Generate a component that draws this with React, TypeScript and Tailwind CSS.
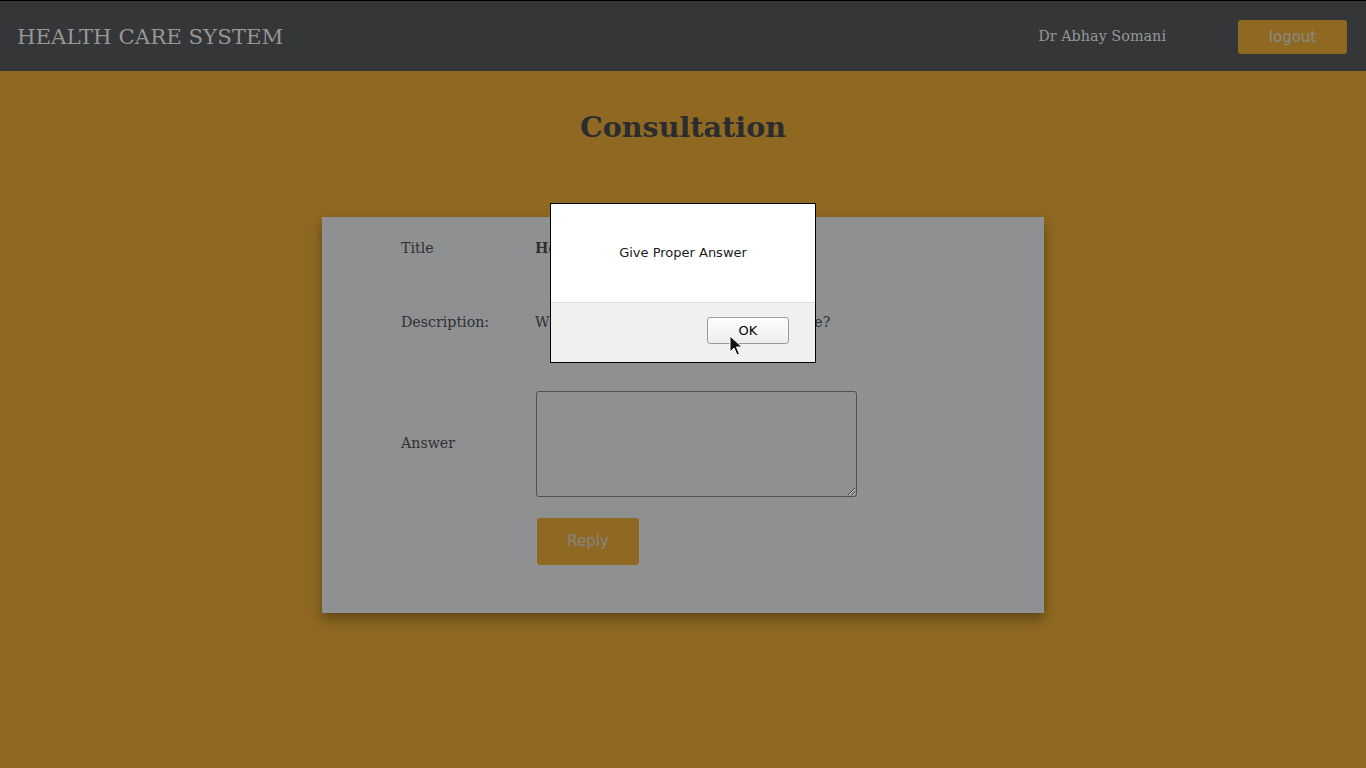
import React from 'react'

const serif = { fontFamily: '"DejaVu Serif", serif' }

function Cursor() {
  return (
    <svg width="14" height="22" viewBox="0 0 14 22" className="absolute left-[178px] top-[32px]">
      <path d="M1 1 L1 17 L5 13 L8 20 L10.5 19 L7.5 12 L13 12 Z" fill="#111" stroke="#fff" strokeWidth="1" strokeLinejoin="round" />
    </svg>
  )
}

function AlertBox() {
  return (
    <div className="absolute left-[550px] top-[203px] w-[266px] h-[160px] bg-white border border-black flex flex-col font-['DejaVu_Sans',sans-serif]">
      <div className="h-[98px] flex items-center justify-center text-[13px] text-[#1a1a1a]">
        Give Proper Answer
      </div>
      <div className="relative flex-1 bg-[#f0f0f0] border-t border-[#dedede] flex items-start justify-end pt-[14px] pr-[26px]">
        <button className="w-[82px] h-[27px] rounded-[3px] border border-[#9a9a9a] bg-gradient-to-b from-white to-[#ececec] text-[13px] text-black">
          OK
        </button>
        <Cursor />
      </div>
    </div>
  )
}

export default function App() {
  return (
    <div className="relative min-h-[768px] bg-[#8f6921]">
      <header className="h-[71px] bg-[#343638] border-t border-black flex items-center pt-[2px] px-[17px]" style={serif}>
        <div className="text-[21.3px] text-[#979797]">HEALTH CARE SYSTEM</div>
        <div className="ml-auto mr-[72px] text-[14.4px] text-[#979797]">Dr Abhay Somani</div>
        <button className="w-[109px] h-[34px] mr-[2px] rounded-[3px] bg-[#8f6921] text-[15px] text-[#8a8a8a] font-['DejaVu_Sans',sans-serif]">
          logout
        </button>
      </header>

      <h1 className="text-center text-[28.6px] font-bold text-[#2a2c30] pt-[35px]" style={serif}>
        Consultation
      </h1>

      <div className="mx-auto mt-[68px] w-[722px] h-[396px] bg-[#8f9091] shadow-[0_6px_12px_rgba(0,0,0,0.35)] pl-[79px] pt-[22px]" style={serif}>
        <div className="grid grid-cols-[134px_1fr] text-[14.2px] text-[#2e2f31]">
          <div className="h-[18px] leading-[18px]">Title</div>
          <div className="h-[18px] leading-[18px] font-bold">Headache</div>
          <div className="mt-[56px] h-[18px] leading-[18px]">Description:</div>
          <div className="mt-[56px] h-[18px] leading-[18px]">What should I take for a huge headache?</div>
          <div className="mt-[60px] flex items-center">Answer</div>
          <div className="mt-[60px]">
            <textarea className="block w-[321px] h-[106px] ml-[1px] rounded-[3px] border border-[#505152] bg-transparent resize-y" />
          </div>
          <div />
          <div className="mt-[21px]">
            <button className="w-[102px] h-[47px] ml-[2px] rounded-[3px] bg-[#8f6921] text-[15px] text-[#858585] font-['DejaVu_Sans',sans-serif]">
              Reply
            </button>
          </div>
        </div>
      </div>

      <AlertBox />
    </div>
  )
}
